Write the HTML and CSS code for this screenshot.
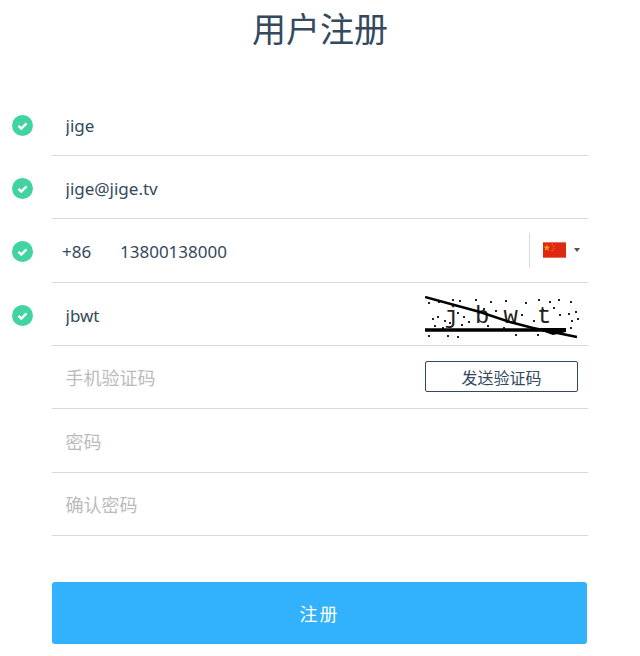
FILE: index.html
```html
<!DOCTYPE html>
<html lang="zh-CN">
<head>
    <meta charset="UTF-8">
    <meta name="viewport" content="width=device-width, initial-scale=1.0">
    <title>用户注册</title>
    <link rel="stylesheet" href="styles.css">
</head>
<body>
    <h1 class="title">用户注册</h1>
    <form class="register-form">
        <div class="row">
            <div class="status">
                <svg class="check" viewBox="0 0 21 21"><circle cx="10.5" cy="10.5" r="10.5"/><path d="M6.5 10.8l2.8 2.7 5.2-5.2"/></svg>
            </div>
            <div class="field">
                <input class="text-input" type="text" value="jige">
            </div>
        </div>
        <div class="row">
            <div class="status">
                <svg class="check" viewBox="0 0 21 21"><circle cx="10.5" cy="10.5" r="10.5"/><path d="M6.5 10.8l2.8 2.7 5.2-5.2"/></svg>
            </div>
            <div class="field">
                <input class="text-input" type="text" value="jige@jige.tv">
            </div>
        </div>
        <div class="row">
            <div class="status">
                <svg class="check" viewBox="0 0 21 21"><circle cx="10.5" cy="10.5" r="10.5"/><path d="M6.5 10.8l2.8 2.7 5.2-5.2"/></svg>
            </div>
            <div class="field">
                <span class="dial-code">+86</span>
                <input class="text-input phone-input" type="text" value="13800138000">
                <div class="country">
                    <svg class="flag" viewBox="0 0 24 16">
                        <rect width="24" height="16" fill="#de2910"/>
                        <path d="M4 2l.9 2.6 2.6 0-2.1 1.6.8 2.6L4 7.2 1.800 8.800l.8-2.600L.5 4.600l2.600 0z" fill="#f2a010"/>
                        <rect x="9" y="1.500" width="1.200" height="1.200" fill="#ee8a10"/>
                        <rect x="10.500" y="3.500" width="1.200" height="1.200" fill="#ee8a10"/>
                        <rect x="10.500" y="6" width="1.200" height="1.200" fill="#ee8a10"/>
                        <rect x="9" y="8" width="1.200" height="1.200" fill="#ee8a10"/>
                    </svg>
                    <span class="caret"></span>
                </div>
            </div>
        </div>
        <div class="row">
            <div class="status">
                <svg class="check" viewBox="0 0 21 21"><circle cx="10.5" cy="10.5" r="10.5"/><path d="M6.5 10.8l2.8 2.7 5.2-5.2"/></svg>
            </div>
            <div class="field">
                <input class="text-input" type="text" value="jbwt">
                <!-- captcha picture -->
                <svg class="captcha" viewBox="0 0 154 44">
                    <path class="noise" d="M3 6h2v2h-2zM13 5h2v2h-2zM27 3h2v2h-2zM34 4h2v2h-2zM50 3h2v2h-2zM65 5h2v2h-2zM80 4h2v2h-2zM100 6h2v2h-2zM113 3h2v2h-2zM124 5h2v2h-2zM133 3h2v2h-2zM145 5h2v2h-2zM7 22h2v2h-2zM12 20h2v2h-2zM19 24h2v2h-2zM9 29h2v2h-2zM24 26h2v2h-2zM32 16h2v2h-2zM38 20h2v2h-2zM43 25h2v2h-2zM36 28h2v2h-2zM58 12h2v2h-2zM70 14h2v2h-2zM96 18h2v2h-2zM108 24h2v2h-2zM117 13h2v2h-2zM128 11h2v2h-2zM134 18h2v2h-2zM143 17h2v2h-2zM150 15h2v2h-2zM146 24h2v2h-2zM152 22h2v2h-2zM3 39h2v2h-2zM22 39h2v2h-2zM32 40h2v2h-2zM90 38h2v2h-2zM112 38h2v2h-2zM145 31h2v2h-2zM62 29h2v2h-2zM17 31h2v2h-2zM78 31h2v2h-2z"/>
                    <text class="captcha-char" x="19.500" y="27">j</text>
                    <text class="captcha-char" x="50" y="27">b</text>
                    <text class="captcha-char" x="78.500" y="27">w</text>
                    <text class="captcha-char" x="112" y="27">t</text>
                    <path class="strike" d="M0 1L55 16 85 26 108 32 152 41"/>
                    <path class="strike strike-low" d="M0 34H141"/>
                    <path class="wedge" d="M108 32L141 32 141 36 128 39z"/>
                </svg>
            </div>
        </div>
        <div class="row">
            <div class="status"></div>
            <div class="field">
                <input class="text-input" type="text" placeholder="手机验证码">
                <button class="send-code" type="button">发送验证码</button>
            </div>
        </div>
        <div class="row">
            <div class="status"></div>
            <div class="field">
                <input class="text-input" type="password" placeholder="密码">
            </div>
        </div>
        <div class="row">
            <div class="status"></div>
            <div class="field">
                <input class="text-input" type="password" placeholder="确认密码">
            </div>
        </div>
        <div class="actions">
            <button class="submit" type="button">注册</button>
        </div>
    </form>
</body>
</html>
```

FILE: styles.css
```css
body {
    margin: 0;
    background-color: #fff;
    color: #34495e;
    font-family: "Noto Sans", "Noto Sans CJK SC", sans-serif;
    overflow: hidden;
}
.title {
    margin: 0;
    height: 92.5px;
    font-size: 34px;
    font-weight: 400;
    line-height: 58px;
    text-align: center;
}
.register-form {
    padding-right: 52px;
}
.row {
    display: flex;
    height: 63.4px;
}
.status {
    width: 52px;
    padding: 22px 0 0 12px;
    box-sizing: border-box;
    flex-shrink: 0;
}
.check {
    display: block;
    width: 21px;
    height: 21px;
}
.check circle {
    fill: #42d3a2;
}
.check path {
    fill: none;
    stroke: #fff;
    stroke-width: 2.4;
}
.field {
    flex: 1;
    display: flex;
    align-items: center;
    border-bottom: 1px solid #d9d9d9;
    padding: 3px 9px 0 13.5px;
}
.text-input {
    flex: 1;
    min-width: 0;
    padding: 0;
    border: 0;
    outline: 0;
    background: none;
    color: #34495e;
    font-family: inherit;
    font-size: 17px;
}
.text-input::placeholder {
    color: #bbb;
    font-size: 18px;
    opacity: 1;
}
.dial-code {
    margin-left: -3.5px;
    width: 58px;
    font-size: 17px;
}
.country {
    display: flex;
    align-items: center;
    height: 35px;
    width: 51px;
    margin: -3px -1px 0 0;
    border-left: 1px solid #d9d9d9;
    padding-left: 13px;
    box-sizing: border-box;
}
.flag {
    width: 23px;
    height: 16px;
    flex-shrink: 0;
}
.caret {
    margin-left: 8px;
    border-left: 3.5px solid transparent;
    border-right: 3.5px solid transparent;
    border-top: 4px solid #555;
}
.captcha {
    width: 154px;
    height: 44px;
    margin-top: 6px;
    flex-shrink: 0;
}
.noise {
    fill: #222;
}
.captcha-char {
    fill: #222;
    font-family: "Liberation Mono", monospace;
    font-size: 24px;
}
.strike {
    fill: none;
    stroke: #000;
    stroke-width: 2.5;
}
.strike-low {
    stroke-width: 3.5;
}
.wedge {
    fill: #000;
}
.send-code {
    width: 153px;
    height: 31px;
    margin: -4px 1px 0 0;
    padding: 0;
    border: 1px solid #34495e;
    border-radius: 2px;
    background: #fff;
    color: #34495e;
    font-family: inherit;
    font-size: 16px;
}
.actions {
    margin-top: 46px;
    padding: 0 1px 0 52px;
}
.submit {
    display: block;
    width: 100%;
    height: 62px;
    padding: 0;
    border: 0;
    border-radius: 3px;
    background-color: #32b1fc;
    color: #fff;
    font-family: inherit;
    font-size: 18px;
    letter-spacing: 2px;
}
```
